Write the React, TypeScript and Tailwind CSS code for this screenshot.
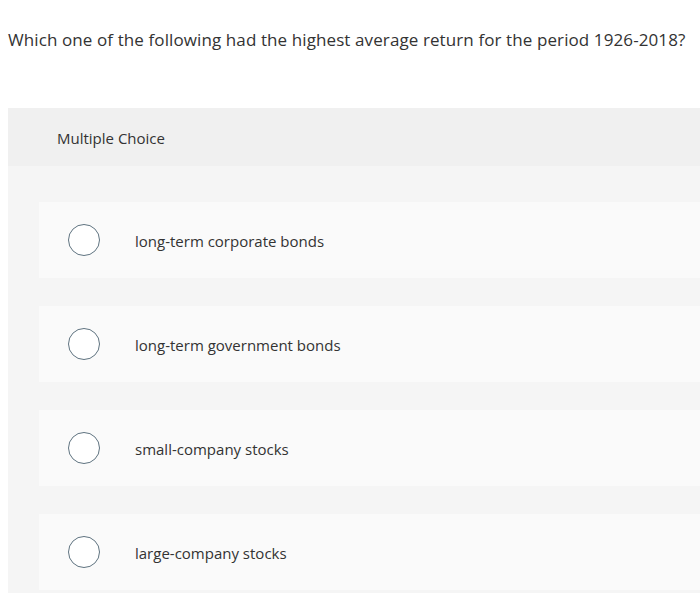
export default function App() {
  const options = [
    "long-term corporate bonds",
    "long-term government bonds",
    "small-company stocks",
    "large-company stocks",
  ];
  return (
    <div className="w-[700px] h-[593px] overflow-hidden bg-white text-[#333]" style={{ fontFamily: "'Open Sans', 'Liberation Sans', sans-serif" }}>
      <p className="pl-[8px] pt-[28px] text-[17px] leading-[24px] tracking-[0.1px] text-[#333] whitespace-nowrap">
        Which one of the following had the highest average return for the period 1926-2018?
      </p>
      <div className="ml-[8px] mt-[56px] bg-[#f5f5f5] pb-[30px]">
        <div className="h-[58px] bg-[#f0f0f0] flex items-center pl-[49px] pt-[2px] text-[15px]">Multiple Choice</div>
        <div className="pl-[31px] pt-[36px] flex flex-col gap-[28px]">
          {options.map((o) => (
            <div key={o} className="h-[76px] bg-[#fafafa] flex items-center">
              <span className="ml-[29px] w-[32px] h-[32px] rounded-full border-[1.5px] border-[#5f7380] bg-white shrink-0" />
              <span className="ml-[35px] pt-[2px] text-[15px] text-[#333]">{o}</span>
            </div>
          ))}
        </div>
      </div>
    </div>
  );
}
